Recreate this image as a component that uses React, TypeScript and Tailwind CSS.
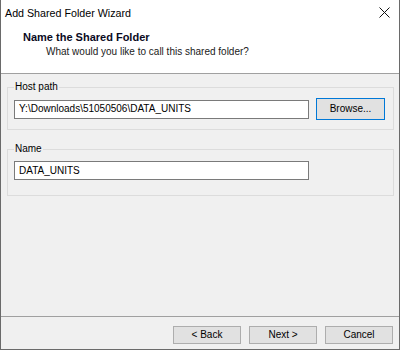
export default function App() {
  return (
    <div className="w-[400px] h-[350px] flex flex-col bg-[#f0f0f0] border-x border-b border-[#6a6a6a] text-[10px] leading-[14px] text-black font-['Liberation_Sans',Arial,sans-serif]">
      {/* title bar */}
      <div className="h-[26px] bg-white flex items-center justify-between pl-[4px] pr-[9px]">
        <span className="text-[10.7px]">Add Shared Folder Wizard</span>
        <svg width="11" height="11" viewBox="0 0 11 11" className="mt-[-1px]">
          <path d="M0.5 0.5 L10.5 10.5 M10.5 0.5 L0.5 10.5" stroke="#111" strokeWidth="1" />
        </svg>
      </div>
      {/* header */}
      <div className="h-[48px] bg-white border-b border-[#a0a0a0] pt-[4px]">
        <div className="pl-[22px] text-[11px] font-bold text-[#0a0a1e]">Name the Shared Folder</div>
        <div className="pl-[45px] mt-[1px] text-[#1a1a1a]">What would you like to call this shared folder?</div>
      </div>
      {/* content */}
      <div className="flex-1 flex flex-col pl-[6px]">
        <fieldset className="mt-[6px] w-[387px] border border-[#dcdcdc] px-[6px] pb-[9px]">
          <legend className="px-[1px]">Host path</legend>
          <div className="flex items-center gap-[7px] mt-[4px] h-[22px]">
            <div className="w-[295px] h-[19px] bg-white border border-[#7a7a7a] pl-[4px] flex items-center">
              Y:\Downloads\51050506\DATA_UNITS
            </div>
            <button className="w-[69px] h-[22px] bg-[#e1e1e1] border border-[#0078d7] flex items-center justify-center">
              Browse...
            </button>
          </div>
        </fieldset>
        <fieldset className="mt-[12px] w-[387px] border border-[#dcdcdc] px-[6px] pb-[15px]">
          <legend className="px-[1px]">Name</legend>
          <div className="mt-[5px] w-[295px] h-[19px] bg-white border border-[#7a7a7a] pl-[4px] flex items-center">
            DATA_UNITS
          </div>
        </fieldset>
      </div>
      {/* footer */}
      <div className="h-[33px] border-t border-[#a0a0a0] flex justify-end gap-[8px] pt-[9px] pr-[6px]">
        <button className="w-[68px] h-[18px] bg-[#e1e1e1] border border-[#adadad] flex items-center justify-center">
          &lt; Back
        </button>
        <button className="w-[68px] h-[18px] bg-[#e1e1e1] border border-[#adadad] flex items-center justify-center">
          Next &gt;
        </button>
        <button className="w-[68px] h-[18px] bg-[#e1e1e1] border border-[#adadad] flex items-center justify-center">
          Cancel
        </button>
      </div>
    </div>
  )
}
